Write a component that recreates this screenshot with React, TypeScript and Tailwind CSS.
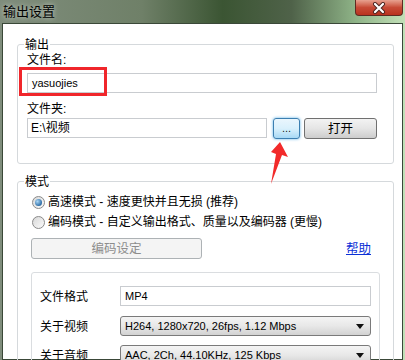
import React from "react";

const cjk = "font-['Noto_Sans_CJK_SC',sans-serif]";
const latin = "font-['Liberation_Sans','Noto_Sans_CJK_SC',sans-serif]";

function Radio({ checked }: { checked?: boolean }) {
  return (
    <span className="flex size-[13px] shrink-0 items-center justify-center rounded-full border border-[#8a8a8a] bg-gradient-to-br from-[#d8d8d8] to-[#fafafa]">
      {checked && <span className="size-[7px] rounded-full bg-[radial-gradient(circle_at_35%_35%,#a9d6f5,#2f6fa8_70%,#1c4f80)]" />}
    </span>
  );
}

function Combo({ value }: { value: string }) {
  return (
    <div className="flex h-[20px] w-[251px] items-center rounded-[3px] border border-[#7a7a7a] bg-gradient-to-b from-[#f4f4f4] via-[#e8e8e8] to-[#d2d2d2] pl-[4px] pr-[6px]">
      <span className={`${latin} flex-1 text-[11px] leading-none text-black`}>{value}</span>
      <svg width="8" height="5" viewBox="0 0 8 5"><path d="M0 0h8L4 5z" fill="#111" /></svg>
    </div>
  );
}

export default function App() {
  return (
    <div className="relative h-[360px] w-[405px] overflow-hidden bg-[linear-gradient(90deg,#7f8d7c_0%,#6f8068_35%,#3b5533_55%,#4f6249_72%,#8fb488_88%,#c2e0b8_100%)]">
      {/* Title bar */}
      <div className="flex h-[23px] items-start">
        <span className={`${cjk} pl-[3px] pt-[3px] text-[13px] leading-[16px] text-black [text-shadow:0_0_5px_rgba(255,255,255,0.7)]`}>输出设置</span>
        <button className="ml-auto mr-[2px] flex h-[16px] w-[48px] items-center justify-center rounded-b-[4px] border border-t-0 border-[#5e2a22] bg-gradient-to-b from-[#e7a190] via-[#c74a36] to-[#b9321f]">
          <svg width="14" height="12" viewBox="0 0 14 12">
            <path d="M3 2l8 8M11 2l-8 8" stroke="#4a2420" strokeWidth="4" strokeLinecap="round" />
            <path d="M3 2l8 8M11 2l-8 8" stroke="#fff" strokeWidth="2.2" strokeLinecap="round" />
          </svg>
        </button>
      </div>

      {/* Body */}
      <div className="mx-[2px] h-[337px] border border-[#3a4838] bg-white pl-[14px] pr-[8px]">
        {/* 输出 group */}
        <fieldset className="mt-[13px] rounded-[3px] border border-[#d5d9dc] pb-[25px]">
          <legend className={`${cjk} ml-[6px] px-[1px] text-[12px] leading-[14px] text-black`}>输出</legend>
          <div className="pl-[9px] pr-[16px]">
            <div className={`${latin} mt-[2px] text-[12px] leading-[14px] text-black`}>文件名:</div>
            <div className="mt-[6px] flex h-[20px] items-center border border-[#c9ccd0] px-[4px]">
              <span className={`${latin} text-[11px] text-black`}>yasuojies</span>
            </div>
            <div className={`${latin} mt-[9px] text-[12px] leading-[14px] text-black`}>文件夹:</div>
            <div className="mt-[2px] flex h-[20px] items-center">
              <div className="flex h-[20px] w-[240px] items-center border border-[#c9ccd0] px-[3px]">
                <span className={`${latin} text-[12px] text-black`}>E:\视频</span>
              </div>
              <button className="ml-[6px] flex h-[21px] w-[27px] items-end justify-center rounded-[3px] border border-[#3c7fb1] bg-gradient-to-b from-[#eaf6fd] via-[#d9f0fc] to-[#a7d9f5] pb-[4px] shadow-[0_0_3px_#5ab0e6]">
                <span className={`${latin} text-[11px] leading-none text-[#1a1a1a]`}>...</span>
              </button>
              <button className={`${cjk} ml-[4px] flex h-[21px] w-[73px] items-center justify-center rounded-[3px] border border-[#707070] bg-gradient-to-b from-[#f3f3f3] via-[#e5e5e5] to-[#cdcdcd] text-[12.5px] text-black`}>
                打开
              </button>
            </div>
          </div>
        </fieldset>

        {/* 模式 group */}
        <fieldset className="mt-[10px] h-[200px] rounded-[3px] border border-[#d5d9dc]">
          <legend className={`${cjk} ml-[6px] px-[1px] text-[12px] leading-[14px] text-black`}>模式</legend>
          <div className="pl-[14px] pr-[22px]">
            <div className="mt-[6px] flex h-[16px] items-center gap-[3px]">
              <Radio checked />
              <span className={`${latin} text-[12px] leading-none text-black`}>高速模式 - 速度更快并且无损 (推荐)</span>
            </div>
            <div className="mt-[4px] flex h-[16px] items-center gap-[3px]">
              <Radio />
              <span className={`${latin} text-[12px] leading-none text-black`}>编码模式 - 自定义输出格式、质量以及编码器 (更慢)</span>
            </div>
          </div>
          <div className="mt-[8px] flex items-center pl-[13px] pr-[22px]">
            <button disabled className={`${cjk} flex h-[21px] w-[171px] items-center justify-center rounded-[3px] border border-[#adb2b5] bg-[#f4f4f4] text-[12.5px] text-[#8d8d8d]`}>
              编码设定
            </button>
            <a className={`${cjk} ml-auto text-[12.5px] leading-none text-[#0b30d6] underline`}>帮助</a>
          </div>
          <div className="ml-[13px] mr-[13px] mt-[13px] h-[120px] rounded-[3px] border border-[#dadde0] pl-[8px] pr-[8px] pt-[13px]">
            <div className="flex items-center">
              <span className={`${cjk} w-[80px] text-[12px] text-black`}>文件格式</span>
              <div className="flex h-[20px] w-[251px] items-center border border-[#c9ccd0] px-[4px]">
                <span className={`${latin} text-[11px] text-black`}>MP4</span>
              </div>
            </div>
            <div className="mt-[10px] flex items-center">
              <span className={`${cjk} w-[80px] text-[12px] text-black`}>关于视频</span>
              <Combo value="H264, 1280x720, 26fps, 1.12 Mbps" />
            </div>
            <div className="mt-[9px] flex items-center">
              <span className={`${cjk} w-[80px] text-[12px] text-black`}>关于音频</span>
              <Combo value="AAC, 2Ch, 44.10KHz, 125 Kbps" />
            </div>
          </div>
        </fieldset>
      </div>

      {/* Red annotation overlays */}
      <div className="absolute left-[19px] top-[67px] h-[29px] w-[88px] border-[3px] border-[#f0262b]" />
      <svg className="absolute left-0 top-0" width="405" height="360" viewBox="0 0 405 360">
        <polygon points="280,142 288,157 282,155 271,184 276,154 271,152" fill="#f22a2a" />
      </svg>
    </div>
  );
}
